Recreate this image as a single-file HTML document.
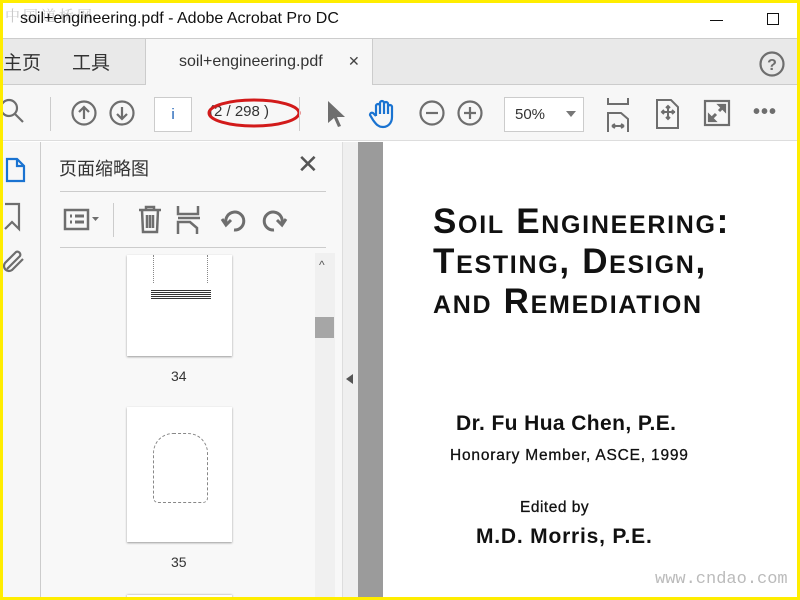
<!DOCTYPE html>
<html><head><meta charset="utf-8"><style>
*{margin:0;padding:0;box-sizing:border-box}
body{width:800px;height:600px;overflow:hidden;background:#ffed00;font-family:"Liberation Sans","Noto Sans CJK SC",sans-serif;position:relative}
.a{position:absolute}
.ic{position:absolute;stroke:#6e6e6e;fill:none;stroke-width:2.2}
.sc{font-family:"Liberation Sans",sans-serif;font-weight:bold;color:#111;white-space:nowrap}
</style></head><body>
<div class="a" style="left:3px;top:3px;width:794px;height:594px;background:#fff;overflow:hidden">
 <div class="a" style="left:0;top:0;width:794px;height:35px;background:#fff"></div>
 <div class="a" style="left:2px;top:2px;font-size:15px;color:#c8c8c8;letter-spacing:3px;font-family:'Noto Serif CJK SC',serif">中国道桥网</div>
 <div class="a" style="left:17px;top:7px;font-size:16px;color:#111">soil+engineering.pdf - Adobe Acrobat Pro DC</div>
 <div class="a" style="left:707px;top:17px;width:13px;height:1px;background:#111"></div>
 <div class="a" style="left:764px;top:10px;width:12px;height:12px;border:1px solid #111"></div>
 <div class="a" style="left:0;top:35px;width:794px;height:47px;background:#e9e9e9;border-top:1px solid #ccc;border-bottom:1px solid #ccc"></div>
 <div class="a" style="left:142px;top:36px;width:228px;height:46px;background:#f7f7f7;border-left:1px solid #ccc;border-right:1px solid #ccc"></div>
 <div class="a" style="left:0;top:45px;font-size:19px;color:#333">主页</div>
 <div class="a" style="left:69px;top:45px;font-size:19px;color:#333">工具</div>
 <div class="a" style="left:176px;top:50px;font-size:16px;color:#333">soil+engineering.pdf</div>
 <div class="a" style="left:345px;top:50px;font-size:14px;color:#444">✕</div>
 <svg class="ic" style="left:755px;top:47px" width="28" height="28"><circle cx="14" cy="14" r="11.5"/><text x="14" y="20" text-anchor="middle" font-size="16" font-weight="bold" fill="#6e6e6e" stroke="none" font-family="Liberation Sans">?</text></svg>
 <div class="a" style="left:0;top:82px;width:794px;height:56px;background:#f7f7f7;border-bottom:1px solid #ddd"></div>
 <svg class="ic" style="left:-4px;top:94px" width="30" height="30"><circle cx="10" cy="11" r="8"/><path d="M16 17l8 8"/></svg>
 <div class="a" style="left:47px;top:94px;width:1px;height:34px;background:#ccc"></div>
 <svg class="ic" style="left:67px;top:96px" width="28" height="28"><circle cx="14" cy="14" r="11.5"/><path d="M14 20V8M9 13l5-5 5 5"/></svg>
 <svg class="ic" style="left:105px;top:96px" width="28" height="28"><circle cx="14" cy="14" r="11.5"/><path d="M14 8v12M9 15l5 5 5-5"/></svg>
 <div class="a" style="left:151px;top:94px;width:38px;height:35px;background:#fff;border:1px solid #ccc;font-size:15px;color:#1a5fb4;text-align:center;line-height:33px">i</div>
 <div class="a" style="left:206px;top:100px;font-size:15px;color:#333">(2 / 298 )</div>
 <svg class="a" style="left:203px;top:92px" width="100" height="38"><ellipse cx="48" cy="18" rx="45" ry="13" fill="none" stroke="#d21a1a" stroke-width="3"/></svg>
 <div class="a" style="left:296px;top:94px;width:1px;height:34px;background:#ccc"></div>
 <svg class="a" style="left:322px;top:96px" width="22" height="30"><path d="M3 2v22l6-5 4 9 3-1-4-9h8z" fill="#6e6e6e"/></svg>
 <svg class="ic" style="left:365px;top:95px;stroke:#1a73d1" width="32" height="32"><path d="M8 18V8a2 2 0 014 0v8V5a2 2 0 014 0v11V6a2 2 0 014 0v10V9a2 2 0 014 0v10c0 6-4 10-9 10s-7-3-10-7l-3-5a2 2 0 013-2l3 3"/></svg>
 <svg class="ic" style="left:415px;top:96px" width="28" height="28"><circle cx="14" cy="14" r="11.5"/><path d="M8 14h12"/></svg>
 <svg class="ic" style="left:453px;top:96px" width="28" height="28"><circle cx="14" cy="14" r="11.5"/><path d="M8 14h12M14 8v12"/></svg>
 <div class="a" style="left:501px;top:94px;width:80px;height:35px;background:#fff;border:1px solid #ccc;font-size:15px;color:#333;line-height:33px;padding-left:10px">50%</div>
 <div class="a" style="left:563px;top:108px;border:5px solid transparent;border-top:6px solid #777"></div>
 <svg class="ic" style="left:603px;top:95px" width="26" height="34"><path d="M2 0v6h20V0M2 34V15h13l7 6v13M6 28h12M6 28l3-2M6 28l3 2M18 28l-3-2M18 28l-3 2" stroke-width="2"/></svg>
 <svg class="ic" style="left:652px;top:96px" width="26" height="30"><path d="M2 1h14l7 7v21H2z M13 7v13M7 13h13M11 9l2-2 2 2M11 18l2 2 2-2M9 11l-2 2 2 2M17 11l2 2-2 2" stroke-width="2"/></svg>
 <svg class="ic" style="left:700px;top:96px" width="28" height="28"><rect x="2" y="2" width="24" height="24"/><path d="M6 22l7-7M16 12l6-6" stroke-width="3"/><path d="M6 16v6h6z M22 12V6h-6z" fill="#6e6e6e"/></svg>
 <div class="a" style="left:750px;top:98px;font-size:20px;color:#6e6e6e;letter-spacing:1px;font-weight:bold">•••</div>
 <div class="a" style="left:0;top:139px;width:38px;height:455px;background:#f7f7f7;border-right:1px solid #ccc"></div>
 <svg class="ic" style="left:0;top:153px;stroke:#1a73d1" width="24" height="30"><path d="M4 3h10l7 7v15H4z M14 3v7h7"/></svg>
 <svg class="ic" style="left:0;top:199px" width="20" height="30"><path d="M2 2h14v25l-7-7-7 7"/></svg>
 <svg class="ic" style="left:0;top:244px" width="24" height="30"><path d="M4 22L17 9a3 3 0 00-4-4L2 16a5 5 0 007 7l11-11"/></svg>
 <div class="a" style="left:38px;top:139px;width:301px;height:455px;background:#f8f8f8"></div>
 <div class="a" style="left:56px;top:152px;font-size:18px;color:#333">页面缩略图</div>
 <div class="a" style="left:294px;top:146px;font-size:26px;color:#555">✕</div>
 <div class="a" style="left:57px;top:188px;width:266px;height:1px;background:#ccc"></div>
 <div class="a" style="left:57px;top:244px;width:266px;height:1px;background:#ccc"></div>
 <svg class="ic" style="left:60px;top:204px" width="40" height="26"><rect x="2" y="3" width="23" height="19" stroke-width="2.5"/><path d="M7 9h2M7 15h2M12 9h9M12 15h9" stroke-width="3"/><path d="M29 10h7l-3.5 4z" fill="#6e6e6e" stroke="none"/></svg>
 <div class="a" style="left:110px;top:200px;width:1px;height:34px;background:#ccc"></div>
 <svg class="ic" style="left:133px;top:201px" width="28" height="32"><path d="M3 6h22M10 6V3h8v3M6 6l1 22h14l1-22M11 11v13M14 11v13M17 11v13" stroke-width="2.5"/></svg>
 <svg class="ic" style="left:173px;top:201px" width="28" height="32"><path d="M2 2v8h20V2M2 30V18h12l7 6v6M2 14h22" stroke-width="2.5"/></svg>
 <svg class="ic" style="left:216px;top:202px" width="30" height="30"><path d="M7 18A9 9 0 1 1 15 25M3 14l4 6 5-5" stroke-width="3"/></svg>
 <svg class="ic" style="left:256px;top:202px" width="30" height="30"><path d="M23 18A9 9 0 1 0 15 25M27 14l-4 6-5-5" stroke-width="3"/></svg>
 <div class="a" style="left:124px;top:252px;width:105px;height:101px;background:#fff;box-shadow:0 1px 2px #999"></div>
 <div class="a" style="left:150px;top:252px;width:55px;height:28px;border-left:1px dotted #888;border-right:1px dotted #888"></div>
 <div class="a" style="left:148px;top:287px;width:60px;height:9px;background:repeating-linear-gradient(#333 0 1px,#fff 1px 2px)"></div>
 <div class="a" style="left:168px;top:365px;font-size:14px;color:#333">34</div>
 <div class="a" style="left:124px;top:404px;width:105px;height:135px;background:#fff;box-shadow:0 1px 2px #999"></div>
 <div class="a" style="left:150px;top:430px;width:55px;height:70px;border:1px dashed #888;border-radius:20px 20px 5px 5px"></div>
 <div class="a" style="left:168px;top:551px;font-size:14px;color:#333">35</div>
 <div class="a" style="left:124px;top:592px;width:105px;height:5px;background:#fff;box-shadow:0 0 2px #999"></div>
 <div class="a" style="left:312px;top:250px;width:20px;height:344px;background:#f0f0f0"></div>
 <div class="a" style="left:316px;top:255px;font-size:12px;color:#555">^</div>
 <div class="a" style="left:312px;top:314px;width:19px;height:21px;background:#a6a6a6"></div>
 <div class="a" style="left:339px;top:139px;width:16px;height:455px;background:#efefef;border-left:1px solid #ddd"></div>
 <div class="a" style="left:343px;top:371px;border:5px solid transparent;border-right:7px solid #555;border-left:0"></div>
 <div class="a" style="left:355px;top:139px;width:25px;height:455px;background:#9b9b9b"></div>
 <div class="a" style="left:380px;top:139px;width:414px;height:455px;background:#fff"></div>
 <div class="a sc" style="left:430px;top:199px;font-size:35px;line-height:40px;font-variant:small-caps;letter-spacing:1.7px">Soil Engineering:<br>Testing, Design,<br>and Remediation</div>
 <div class="a sc" style="left:453px;top:409px;font-size:21px;letter-spacing:0.4px">Dr. Fu Hua Chen, P.E.</div>
 <div class="a sc" style="left:447px;top:444px;font-size:15.5px;font-weight:normal;-webkit-text-stroke:0.3px #111;letter-spacing:0.8px">Honorary Member, ASCE, 1999</div>
 <div class="a sc" style="left:517px;top:496px;font-size:15.5px;font-weight:normal;-webkit-text-stroke:0.3px #111;letter-spacing:0.5px">Edited by</div>
 <div class="a sc" style="left:473px;top:522px;font-size:21px;letter-spacing:0.8px">M.D. Morris, P.E.</div>
 <div class="a" style="left:652px;top:567px;font-size:17px;color:#bbb;font-family:'Liberation Mono',monospace">www.cndao.com</div>
</div>
</body></html>
